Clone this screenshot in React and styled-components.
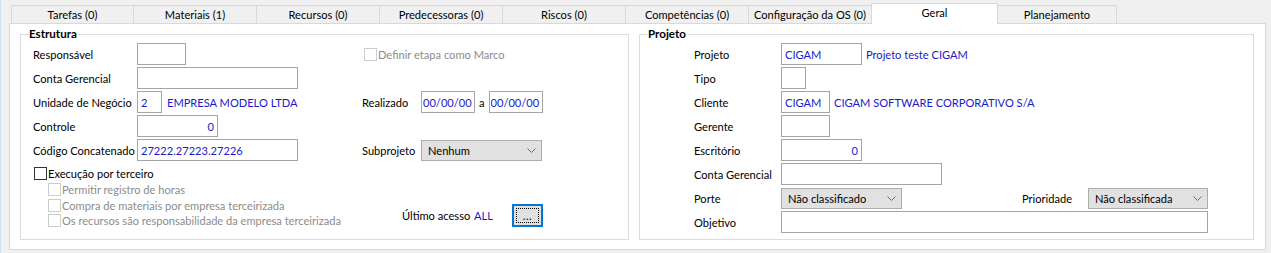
import React from 'react';
import styled, { createGlobalStyle, css } from 'styled-components';

const FONT = `"Lato", "Liberation Sans", sans-serif`;
const BLUE = '#1a1ac8';

const GlobalStyle = createGlobalStyle`
  html, body { margin: 0; padding: 0; background: #f0f0f0; }
  body { font-family: ${FONT}; font-size: 11.1px; color: #000; }
  *, *::before, *::after { box-sizing: border-box; }
`;

const Window = styled.div`
  width: 1271px;
  height: 253px;
  border-left: 1px solid #d3e0f2;
  padding: 3px 0 0 8px;
`;

const TabStrip = styled.div`
  display: flex;
  align-items: flex-end;
  height: 21px;
  margin-bottom: -1px;
  padding-left: 2px;
  position: relative;
  z-index: 1;
`;

const Tab = styled.div`
  flex: none;
  width: ${p => p.$w}px;
  height: 18px;
  margin-bottom: 1px;
  border-top: 1px solid #d9d9d9;
  border-right: 1px solid #d9d9d9;
  border-left: ${p => (p.$first ? '1px solid #d9d9d9' : 'none')};
  background: #f0f0f0;
  display: flex;
  align-items: center;
  justify-content: center;
  line-height: 14px;
  padding-top: 1px;
  white-space: nowrap;
  ${p =>
    p.$active &&
    css`
      height: 21px;
      margin: 0 0 0 -1px;
      border-left: 1px solid #d9d9d9;
      background: #fff;
      align-items: flex-start;
      padding-top: 2px;
    `}
`;

const Panel = styled.div`
  width: 1257px;
  height: 227px;
  background: #fff;
  border: 1px solid #d9d9d9;
  display: flex;
  gap: 10px;
  padding: 3px 11px 9px 10px;
`;

const GroupBox = styled.fieldset`
  margin: 0;
  padding: 0;
  width: ${p => p.$w}px;
  min-width: 0;
  height: 213px;
  border: 1px solid #dcdcdc;
  flex: none;
`;

const Legend = styled.legend`
  margin-left: 7px;
  padding: 0 1px;
  font-weight: bold;
  font-size: 11.6px;
  line-height: 14px;
`;

const GroupBody = styled.div`
  display: flex;
  padding: 2px 0 0 ${p => p.$pl}px;
`;

const Column = styled.div`
  display: flex;
  flex-direction: column;
  width: ${p => (p.$w ? `${p.$w}px` : 'auto')};
  flex: none;
`;

const Row = styled.div`
  display: flex;
  align-items: center;
  height: 22px;
  margin-bottom: 2px;
  margin-top: ${p => p.$mt || 0}px;
  padding-left: ${p => p.$pl || 0}px;
  white-space: nowrap;
`;

const Label = styled.span`
  flex: none;
  width: ${p => p.$w}px;
  margin-left: ${p => p.$ml || 0}px;
  white-space: nowrap;
`;

const TextBox = styled.input.attrs({ readOnly: true, type: 'text' })`
  flex: none;
  width: ${p => p.$w}px;
  height: 22px;
  margin: 0;
  border: 1px solid #a5a5a5;
  border-radius: 0;
  background: #fff;
  padding: 0 ${p => (p.$tight ? 1 : 3)}px;
  font: inherit;
  color: ${BLUE};
  text-align: ${p => (p.$right ? 'right' : 'left')};
  outline: none;
`;

const Value = styled.span`
  color: ${BLUE};
  margin-left: ${p => p.$ml || 0}px;
  white-space: nowrap;
`;

const Select = styled.div`
  flex: none;
  width: ${p => p.$w}px;
  height: 21px;
  border: 1px solid #adadad;
  background: #e1e1e1;
  display: flex;
  align-items: center;
  justify-content: space-between;
  padding: 0 5px 0 6px;
  margin-left: ${p => p.$ml || 0}px;
`;

const CheckRow = styled.div`
  display: flex;
  align-items: center;
  height: ${p => p.$h || 16}px;
  margin-top: ${p => p.$mt || 0}px;
  padding-left: ${p => p.$indent || 0}px;
  color: ${p => (p.$disabled ? '#8c8c8c' : '#000')};
  white-space: nowrap;
`;

const Box = styled.span`
  flex: none;
  width: 13px;
  height: 13px;
  margin-right: 1px;
  background: #fff;
  border: 1px solid ${p => (p.$disabled ? '#cccccc' : '#333333')};
`;

const SubChecks = styled.div`
  display: flex;
  flex-direction: column;
  padding-top: 1px;
`;

const Sep = styled.span`
  margin: 0 4px 0 4px;
`;

const DotsButton = styled.button`
  flex: none;
  width: 31px;
  height: 23px;
  margin: 0;
  padding: 2px;
  border: 2px solid #0078d7;
  border-radius: 0;
  background: #e1e1e1;
  font: inherit;
  display: flex;
`;

const FocusRect = styled.span`
  flex: 1;
  border: 1px dotted #000;
  display: flex;
  align-items: flex-end;
  justify-content: center;
  line-height: 10px;
  padding-bottom: 1px;
  letter-spacing: 0.5px;
`;

const Chevron = () => (
  <svg width="9" height="5" viewBox="0 0 9 5">
    <polyline points="0.5,0.5 4.5,4.5 8.5,0.5" fill="none" stroke="#6b6b6b" strokeWidth="1" />
  </svg>
);

const tabs = [
  ['Tarefas (0)', 123],
  ['Materiais (1)', 123],
  ['Recursos (0)', 123],
  ['Predecessoras (0)', 123],
  ['Riscos (0)', 123],
  ['Competências (0)', 123],
  ['Configuração da OS (0)', 123],
  ['Geral', 127],
  ['Planejamento', 119],
];

const Check = ({ label, disabled, indent, h, mt }) => (
  <CheckRow $disabled={disabled} $indent={indent} $h={h} $mt={mt}>
    <Box $disabled={disabled} />
    {label}
  </CheckRow>
);

export default function App() {
  return (
    <>
      <GlobalStyle />
      <Window>
        <TabStrip>
          {tabs.map(([t, w], i) => (
            <Tab key={t} $w={w} $first={i === 0} $active={t === 'Geral'}>
              {t}
            </Tab>
          ))}
        </TabStrip>
        <Panel>
          <GroupBox $w={609}>
            <Legend>Estrutura</Legend>
            <GroupBody $pl={12}>
              <Column $w={329}>
                <Row>
                  <Label $w={104}>Responsável</Label>
                  <TextBox $w={49} value="" />
                </Row>
                <Row>
                  <Label $w={104}>Conta Gerencial</Label>
                  <TextBox $w={161} value="" />
                </Row>
                <Row>
                  <Label $w={104}>Unidade de Negócio</Label>
                  <TextBox $w={25} value="2" />
                  <Value $ml={5}>EMPRESA MODELO LTDA</Value>
                </Row>
                <Row>
                  <Label $w={104}>Controle</Label>
                  <TextBox $w={81} $right value="0" />
                </Row>
                <Row>
                  <Label $w={104}>Código Concatenado</Label>
                  <TextBox $w={161} value="27222.27223.27226" />
                </Row>
                <Check label="Execução por terceiro" indent={1} mt={2} />
                <SubChecks>
                  <Check label="Permitir registro de horas" disabled indent={15} h={15.5} />
                  <Check label="Compra de materiais por empresa terceirizada" disabled indent={15} h={15.5} />
                  <Check label="Os recursos são responsabilidade da empresa terceirizada" disabled indent={15} h={15.5} />
                </SubChecks>
              </Column>
              <Column>
                <Row $pl={2}>
                  <Check label="Definir etapa como Marco" disabled h={22} />
                </Row>
                <Row />
                <Row>
                  <Label $w={59}>Realizado</Label>
                  <TextBox $w={54} $tight value="00/00/00" />
                  <Sep>a</Sep>
                  <TextBox $w={54} $tight value="00/00/00" />
                </Row>
                <Row />
                <Row>
                  <Label $w={59}>Subprojeto</Label>
                  <Select $w={121}>
                    Nenhum
                    <Chevron />
                  </Select>
                </Row>
                <Row $mt={41} $pl={40}>
                  <Label $w={72}>Último acesso</Label>
                  <Label $w={38}>
                    <Value>ALL</Value>
                  </Label>
                  <DotsButton>
                    <FocusRect>...</FocusRect>
                  </DotsButton>
                </Row>
              </Column>
            </GroupBody>
          </GroupBox>
          <GroupBox $w={615}>
            <Legend>Projeto</Legend>
            <GroupBody $pl={54}>
              <Column>
                <Row>
                  <Label $w={87}>Projeto</Label>
                  <TextBox $w={81} value="CIGAM" />
                  <Value $ml={4}>Projeto teste CIGAM</Value>
                </Row>
                <Row>
                  <Label $w={87}>Tipo</Label>
                  <TextBox $w={25} value="" />
                </Row>
                <Row>
                  <Label $w={87}>Cliente</Label>
                  <TextBox $w={49} value="CIGAM" />
                  <Value $ml={4}>CIGAM SOFTWARE CORPORATIVO S/A</Value>
                </Row>
                <Row>
                  <Label $w={87}>Gerente</Label>
                  <TextBox $w={49} value="" />
                </Row>
                <Row>
                  <Label $w={87}>Escritório</Label>
                  <TextBox $w={81} $right value="0" />
                </Row>
                <Row>
                  <Label $w={87}>Conta Gerencial</Label>
                  <TextBox $w={161} value="" />
                </Row>
                <Row>
                  <Label $w={87}>Porte</Label>
                  <Select $w={121}>
                    Não classificado
                    <Chevron />
                  </Select>
                  <Label $w={66} $ml={120}>Prioridade</Label>
                  <Select $w={120}>
                    Não classificada
                    <Chevron />
                  </Select>
                </Row>
                <Row>
                  <Label $w={87}>Objetivo</Label>
                  <TextBox $w={427} value="" />
                </Row>
              </Column>
            </GroupBody>
          </GroupBox>
        </Panel>
      </Window>
    </>
  );
}
